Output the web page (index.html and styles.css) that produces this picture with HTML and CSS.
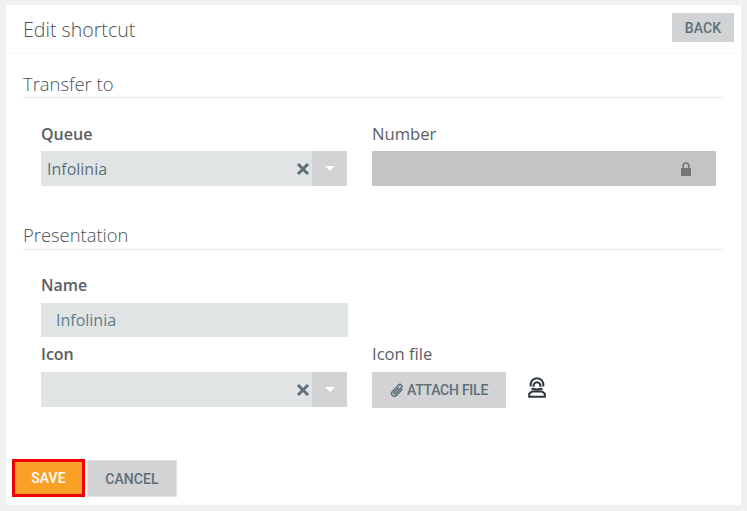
FILE: index.html
```html
<!DOCTYPE html>
<html lang="en">
  <head>
    <meta charset="UTF-8" />
    <meta name="viewport" content="width=device-width, initial-scale=1.0" />
    <title>Edit shortcut</title>
    <link rel="stylesheet" href="styles.css">
  </head>
  <body>
    <main class="panel">
      <header class="panel-header">
        <h1 class="panel-title">Edit shortcut</h1>
        <button class="btn btn-back">BACK</button>
      </header>

      <section class="section section-transfer">
        <h2 class="section-title">Transfer to</h2>
        <div class="row row-transfer">
          <div class="field field-left">
            <label class="field-label">Queue</label>
            <div class="select">
              <span class="select-value">Infolinia</span>
              <svg class="select-clear" viewBox="0 0 14 14"><path d="M2 2l10 10M12 2L2 12" /></svg>
              <span class="select-arrow"><span class="caret"></span></span>
            </div>
          </div>
          <div class="field field-right">
            <label class="field-label field-label-light">Number</label>
            <div class="locked">
              <svg class="lock-icon" viewBox="0 0 10 14"><path d="M1.4 6V3.8a3.6 3.6 0 0 1 7.2 0V6H10v8H0V6zM3 6h4V3.8a2 2 0 0 0-4 0z" /></svg>
            </div>
          </div>
        </div>
      </section>

      <section class="section section-presentation">
        <h2 class="section-title">Presentation</h2>
        <div class="field field-name">
          <label class="field-label">Name</label>
          <input class="text-input" type="text" value="Infolinia" />
        </div>
        <div class="row row-icon">
          <div class="field field-left">
            <label class="field-label">Icon</label>
            <div class="select">
              <span class="select-value"></span>
              <svg class="select-clear" viewBox="0 0 14 14"><path d="M2 2l10 10M12 2L2 12" /></svg>
              <span class="select-arrow"><span class="caret"></span></span>
            </div>
          </div>
          <div class="field field-right">
            <label class="field-label field-label-light">Icon file</label>
            <div class="attach-row">
              <button class="btn btn-attach">
                <svg class="clip-icon" viewBox="0 0 14 14"><path d="M12.4 6.2L6.8 12c-1.4 1.4-3.3 1.6-4.4.5s-1-3 .4-4.4l5.4-5.7c1-1 2.3-1.2 3.1-.4s.6 2.1-.4 3.1L5.800 10.400c-.5.5-1.100.6-1.500.2s-.3-1 .2-1.500l4.400-4.600" /></svg>
                ATTACH FILE
              </button>
              <svg class="agent-icon" viewBox="0 0 18 21">
                <path d="M2.600 9.500C2.200 4.500 5 1.200 9 1.200s6.800 3.300 6.400 8.300" />
                <path d="M5.600 9.800C5.300 7 7 5.200 9 5.200s3.700 1.800 3.400 4.600" />
                <path d="M3.500 11.700c1.500 0 3 .8 5.500.8s4-.8 5.500-.8" />
                <path d="M4 14.500h10l2.800 2.300v3H1.200v-3z" />
              </svg>
            </div>
          </div>
        </div>
      </section>

      <footer class="panel-footer">
        <button class="btn btn-save">SAVE</button>
        <button class="btn btn-cancel">CANCEL</button>
      </footer>
    </main>
  </body>
</html>
```

FILE: styles.css
```css
* {
  margin: 0;
  padding: 0;
  box-sizing: border-box;
  font-family: "Open Sans", sans-serif;
}

html,
body {
  height: 100%;
}

body {
  background-color: #eff1f1;
  padding: 5px 6px 6px;
  overflow: hidden;
}

.panel {
  background-color: white;
  height: 500px;
  display: flex;
  flex-direction: column;
}

.panel-header {
  height: 49px;
  padding: 8px 7px 0 17px;
  display: flex;
  justify-content: space-between;
  align-items: flex-start;
  border-bottom: 1px solid #f6f7f7;
}

.panel-title {
  font-size: 19.6px;
  font-weight: 300;
  line-height: 34px;
  color: #4a5157;
}

/* Buttons */
.btn {
  font-family: Roboto, sans-serif;
  font-weight: 500;
  font-size: 14px;
  letter-spacing: 0.1px;
  color: #5f6f78;
  background-color: #d1d3d5;
  border: none;
  display: flex;
  align-items: center;
  justify-content: center;
}

.btn-back {
  width: 62px;
  height: 29px;
}

.btn-attach {
  width: 134px;
  height: 36px;
  gap: 3px;
  letter-spacing: -0.25px;
}

.btn-save {
  width: 73px;
  height: 38px;
  color: white;
  background-color: #f9a126;
  border: 3px solid #f00000;
}

.btn-cancel {
  width: 90px;
  height: 37px;
  border: 1px solid #dfe1e2;
}

/* Sections */
.section {
  padding-left: 17px;
  padding-right: 18px;
}

.section-transfer {
  padding-top: 17px;
}

.section-presentation {
  padding-top: 36px;
}

.section-title {
  font-size: 18.4px;
  font-weight: 300;
  line-height: 26px;
  color: #4a5157;
  border-bottom: 1px solid #e9ebeb;
  height: 27px;
}

.section-presentation .section-title {
  height: 28px;
}

.row {
  display: flex;
  padding-left: 18px;
}

.row-transfer {
  padding-top: 21px;
}

.row-icon {
  padding-top: 2px;
}

.row-icon .field-label,
.field-name .field-label {
  margin-bottom: 3px;
}

.field-left {
  width: 306px;
  margin-right: 25px;
}

.field-right {
  width: 344px;
}

.field-name {
  padding: 20px 0 0 18px;
  width: 325px;
}

.field-label {
  display: block;
  font-size: 16px;
  font-weight: 600;
  line-height: 30px;
  margin-bottom: 2px;
  color: #5a5e62;
}

.field-label-light {
  font-size: 16.6px;
  font-weight: 500;
}

.select {
  height: 35px;
  background-color: #e1e4e5;
  display: flex;
  align-items: center;
}

.select-value {
  flex: 1;
  padding-left: 6px;
  font-size: 16px;
  color: #5f6f78;
}

.select-clear {
  width: 14px;
  height: 14px;
  margin-right: 2px;
  fill: none;
  stroke: #5f7078;
  stroke-width: 3;
}

.select-arrow {
  width: 35px;
  height: 100%;
  background-color: #d1d3d5;
  display: flex;
  align-items: center;
  justify-content: center;
}

.caret {
  border-left: 5px solid transparent;
  border-right: 5px solid transparent;
  border-top: 5px solid white;
}

.locked {
  height: 35px;
  background-color: #c4c4c4;
  border-radius: 1px;
  display: flex;
  align-items: center;
  justify-content: flex-end;
  padding-right: 25px;
}

.lock-icon {
  width: 10px;
  height: 14px;
  fill: #757575;
}

.text-input {
  display: block;
  width: 307px;
  height: 34px;
  background-color: #e1e4e5;
  border: none;
  padding-left: 15px;
  font-size: 16px;
  color: #5f7d8e;
}

.attach-row {
  display: flex;
  align-items: flex-start;
  gap: 22px;
}

.clip-icon {
  width: 14px;
  height: 14px;
  fill: none;
  stroke: #5f6f78;
  stroke-width: 1.5;
}

.agent-icon {
  width: 18px;
  height: 21px;
  margin-top: 5px;
  fill: none;
  stroke: #2b3640;
  stroke-width: 2;
}

.panel-footer {
  margin-top: auto;
  padding: 0 0 8px 6px;
  display: flex;
  align-items: flex-end;
  gap: 2px;
}
```
